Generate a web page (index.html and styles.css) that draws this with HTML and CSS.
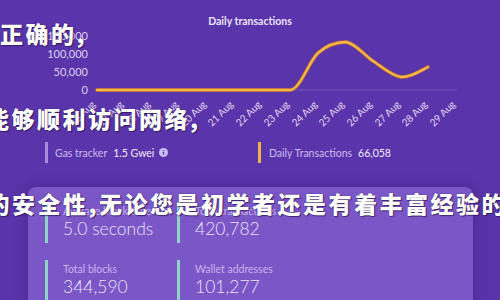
FILE: index.html
```html
<!DOCTYPE html>
<html lang="zh">
<head>
<meta charset="utf-8">
<title>Daily transactions</title>
<link rel="stylesheet" href="styles.css">
</head>
<body>
<main class="dash">
  <svg class="chart" width="500" height="132" viewBox="0 0 500 132" xmlns="http://www.w3.org/2000/svg">
    <text class="chart-title" x="250" y="25" text-anchor="middle">Daily transactions</text>
    <g class="ylab" text-anchor="end">
      <text x="88" y="40">150,000</text>
      <text x="88" y="58">100,000</text>
      <text x="88" y="76">50,000</text>
      <text x="88" y="94">0</text>
    </g>
    <line class="grid" x1="95" y1="90" x2="457" y2="90"/>
    <path class="series-edge" d="M97,90 L290,90 C300,90 309,61 318,53 C327,45 337,42 346,42 C355,43 364,55 373,61 C382,67 392,76 401,77 C410,78 422,70 428,67"/>
    <path class="series" d="M97,90 L290,90 C300,90 309,61 318,53 C327,45 337,42 346,42 C355,43 364,55 373,61 C382,67 392,76 401,77 C410,78 422,70 428,67"/>
    <g class="xlab" text-anchor="end">
      <text x="96" y="105" transform="rotate(-45 96 105)">16 Aug</text>
      <text x="124" y="105" transform="rotate(-45 124 105)">17 Aug</text>
      <text x="151" y="105" transform="rotate(-45 151 105)">18 Aug</text>
      <text x="179" y="105" transform="rotate(-45 179 105)">19 Aug</text>
      <text x="207" y="105" transform="rotate(-45 207 105)">20 Aug</text>
      <text x="234" y="105" transform="rotate(-45 234 105)">21 Aug</text>
      <text x="262" y="105" transform="rotate(-45 262 105)">22 Aug</text>
      <text x="290" y="105" transform="rotate(-45 290 105)">23 Aug</text>
      <text x="318" y="105" transform="rotate(-45 318 105)">24 Aug</text>
      <text x="345" y="105" transform="rotate(-45 345 105)">25 Aug</text>
      <text x="373" y="105" transform="rotate(-45 373 105)">26 Aug</text>
      <text x="401" y="105" transform="rotate(-45 401 105)">27 Aug</text>
      <text x="428" y="105" transform="rotate(-45 428 105)">28 Aug</text>
      <text x="456" y="105" transform="rotate(-45 456 105)">29 Aug</text>
    </g>
  </svg>

  <section class="stats">
    <div class="stat stat-gas">
      <span class="stat-label">Gas tracker</span>
      <span class="stat-value">1.5 Gwei</span>
      <svg class="info" width="9" height="9" viewBox="0 0 10 10"><circle cx="5" cy="5" r="5" fill="#cbbdf0"/><rect x="4.3" y="4.2" width="1.4" height="3.6" rx="0.5" fill="#6a45b8"/><circle cx="5" cy="2.8" r="0.8" fill="#6a45b8"/></svg>
    </div>
    <div class="stat stat-tx">
      <span class="stat-label">Daily Transactions</span>
      <span class="stat-value">66,058</span>
    </div>
  </section>

  <section class="card">
    <div class="metric">
      <div class="metric-label">Average block time</div>
      <div class="metric-value">5.0 seconds</div>
    </div>
    <div class="metric">
      <div class="metric-label">Total transactions</div>
      <div class="metric-value">420,782</div>
    </div>
    <div class="metric">
      <div class="metric-label">Total blocks</div>
      <div class="metric-value">344,590</div>
    </div>
    <div class="metric">
      <div class="metric-label">Wallet addresses</div>
      <div class="metric-value">101,277</div>
    </div>
  </section>
</main>

<div class="captions">
  <p class="cap cap-1">正确的,</p>
  <p class="cap cap-2">能够顺利访问网络,</p>
  <p class="cap cap-3">的安全性,无论您是初学者还是有着丰富经验的</p>
</div>
</body>
</html>
```

FILE: styles.css
```css
html, body {
  margin: 0;
  padding: 0;
}

body {
  width: 500px;
  height: 300px;
  overflow: hidden;
  position: relative;
  background: #5a34aa;
  font-family: "Lato", "Open Sans", sans-serif;
}

.dash {
  display: flex;
  flex-direction: column;
  height: 300px;
  overflow: hidden;
}

.chart {
  display: block;
  flex: none;
}

.chart-title {
  font-family: "Lato", sans-serif;
  font-weight: 700;
  font-size: 10.5px;
  fill: #ece4f8;
}

.ylab text {
  font-family: "Lato", sans-serif;
  font-size: 11px;
  fill: #ddd2f2;
}

.xlab text {
  font-family: "Lato", sans-serif;
  font-size: 10px;
  fill: #e2d8f4;
}

.grid {
  stroke: rgba(255, 255, 255, 0.14);
  stroke-width: 1;
}

.series-edge {
  fill: none;
  stroke: #b0603a;
  stroke-width: 3.8;
  stroke-linecap: round;
  stroke-linejoin: round;
}

.series {
  fill: none;
  stroke: #f4b84a;
  stroke-width: 2.4;
  stroke-linecap: round;
  stroke-linejoin: round;
}

.stats {
  flex: none;
  display: grid;
  grid-template-columns: 213px auto;
  padding-left: 45px;
  margin-top: 10px;
  height: 21px;
}

.stat {
  display: flex;
  align-items: center;
  gap: 6px;
  padding-left: 7px;
  border-left: 3px solid #a88be0;
  font-size: 10.5px;
}

.stat-tx {
  border-left-color: #f0b548;
  padding-left: 8px;
}

.stat-label {
  color: #cbbbef;
}

.stat-value {
  color: #f2ecfb;
}

.info {
  display: block;
  margin-left: -1px;
}

.card {
  flex: 1;
  margin: 24px 27px 0 28px;
  padding: 15px 17px 0;
  background: #7b56c7;
  border-radius: 8px 8px 0 0;
  box-shadow: 0 0 14px rgba(40, 12, 90, 0.35);
  display: grid;
  grid-template-columns: 132px 1fr;
  grid-auto-rows: min-content;
  row-gap: 17px;
}

.metric {
  border-left: 3px solid #8ed3c6;
  padding: 2px 0 3px 15px;
}

.metric-label {
  font-size: 10.5px;
  line-height: 14px;
  color: #c7b3ec;
}

.metric-value {
  font-size: 17.5px;
  line-height: 22px;
  font-weight: 300;
  color: #ebe3f9;
}

.captions {
  position: absolute;
  left: 0;
  top: 0;
  width: 500px;
  height: 300px;
  padding-top: 20px;
  box-sizing: border-box;
  display: flex;
  flex-direction: column;
  gap: 59px;
  overflow: hidden;
  pointer-events: none;
}

.cap {
  margin: 0;
  font-family: "Noto Sans CJK SC", "Noto Sans CJK JP", sans-serif;
  font-weight: 900;
  font-size: 23px;
  line-height: 26px;
  letter-spacing: 2.5px;
  color: #ffffff;
  white-space: nowrap;
  text-shadow: 0 0 1px #2a1650, 1px 1px 1px rgba(30, 10, 60, 0.6);
}

.cap-1 {
  margin-left: 0;
  letter-spacing: 2.5px;
}

.cap-2 {
  margin-left: -14px;
}

.cap-3 {
  margin-left: -13.5px;
}
```
